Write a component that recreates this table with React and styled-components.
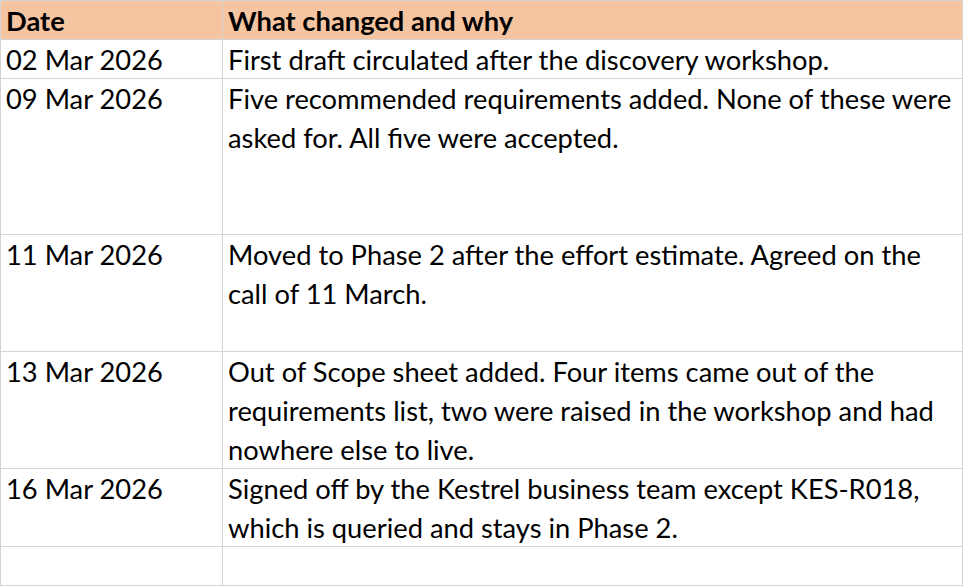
import React from "react";
import styled, { createGlobalStyle } from "styled-components";

const Global = createGlobalStyle`
  html, body { margin: 0; padding: 0; background: #ffffff; }
  body { font-family: Lato, "Open Sans", sans-serif; }
`;

const Sheet = styled.div`
  display: grid;
  grid-template-columns: 222px 740px;
  width: 963px;
  border-top: 1px solid #d4d4d4;
  border-left: 1px solid #d4d4d4;
  box-sizing: border-box;
  color: #000;
`;

const Cell = styled.div`
  box-sizing: border-box;
  height: ${(p) => p.$h}px;
  border-right: 1px solid #d4d4d4;
  border-bottom: 1px solid #d4d4d4;
  background: ${(p) => (p.$head ? "#f5c4a0" : "#ffffff")};
  font-weight: ${(p) => (p.$head ? 700 : 400)};
  font-size: 27.3px;
  line-height: 39px;
  padding: 0 5px;
  overflow: hidden;
  white-space: pre-line;
`;

const rows = [
  { h: 39, date: "02 Mar 2026", text: "First draft circulated after the discovery workshop." },
  { h: 156, date: "09 Mar 2026", text: "Five recommended requirements added. None of these were\nasked for. All five were accepted." },
  { h: 117, date: "11 Mar 2026", text: "Moved to Phase 2 after the effort estimate. Agreed on the\ncall of 11 March." },
  { h: 117, date: "13 Mar 2026", text: "Out of Scope sheet added. Four items came out of the\nrequirements list, two were raised in the workshop and had\nnowhere else to live." },
  { h: 78, date: "16 Mar 2026", text: "Signed off by the Kestrel business team except KES-R018,\nwhich is queried and stays in Phase 2." },
  { h: 39, date: "", text: "" },
];

export default function App() {
  return (
    <>
      <Global />
      <Sheet>
        <Cell $head $h={39}>Date</Cell>
        <Cell $head $h={39}>What changed and why</Cell>
        {rows.map((r, i) => (
          <React.Fragment key={i}>
            <Cell $h={r.h}>{r.date}</Cell>
            <Cell $h={r.h}>{r.text}</Cell>
          </React.Fragment>
        ))}
      </Sheet>
    </>
  );
}
